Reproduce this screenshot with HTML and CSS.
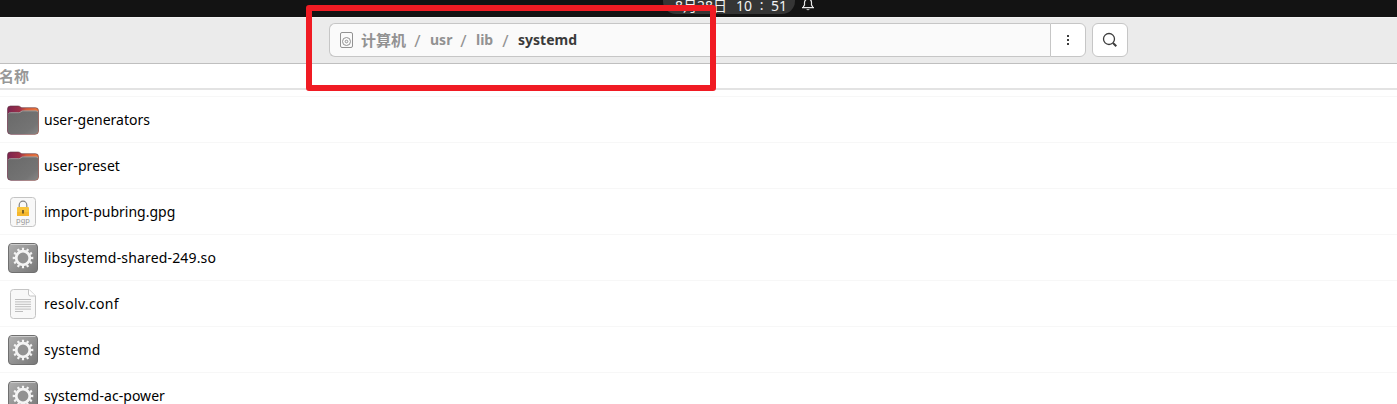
FILE: index.html
```html
<!DOCTYPE html>
<html lang="zh-CN">
<head>
<meta charset="utf-8">
<title>systemd</title>
<link rel="stylesheet" href="styles.css">
</head>
<body>
<svg width="0" height="0" class="defs">
  <defs>
    <linearGradient id="back" x1="0" x2="1" y1="0" y2="0"><stop offset="0" stop-color="#7c2450"/><stop offset=".4" stop-color="#9c3048"/><stop offset=".6" stop-color="#d85c3c"/><stop offset="1" stop-color="#ee7a3c"/></linearGradient>
    <linearGradient id="front" x1="0" x2="1" y1="0" y2="1"><stop offset="0" stop-color="#696969"/><stop offset=".75" stop-color="#747474"/><stop offset="1" stop-color="#858585"/></linearGradient>
    <linearGradient id="metal" x1="0" x2="1" y1="0" y2="1"><stop offset="0" stop-color="#b0b0b0"/><stop offset="1" stop-color="#777"/></linearGradient>
    <symbol id="folder" viewBox="0 0 34 32">
      <path d="M1.500 5Q1.500 2 4.500 2H12Q13.500 2 14.500 3T17 3.700H29.500Q32.500 3.700 32.500 6.700V27Q32.500 30.300 29 30.300H5Q1.500 30.300 1.500 27Z" fill="url(#back)" stroke="#5a3440" stroke-opacity=".6"/>
      <path d="M2 10.500Q2 8.500 4 8.500H12.500Q14 8.500 15 7.500T17.500 6.700H30Q32 6.700 32 8.700V27Q32 30 29 30H5Q2 30 2 27Z" fill="url(#front)"/>
      <path d="M2.500 9.500Q3 8.700 4.500 8.700H12.500Q14 8.700 15 7.700T17.500 6.900H30Q31.500 6.900 31.800 8" fill="none" stroke="#aaa" stroke-width=".8"/>
    </symbol>
    <symbol id="gear" viewBox="0 0 34 32">
      <rect x="2.500" y="1.500" width="29" height="29" rx="3.500" fill="url(#metal)" stroke="#707070"/>
      <path d="M4.500 2.500H29.500" stroke="#ccc" stroke-width="1"/>
      <circle cx="17" cy="16" r="6.800" fill="#929292" stroke="#f4f4f4" stroke-width="2.800"/>
      <circle cx="17" cy="16" r="9.100" fill="none" stroke="#f4f4f4" stroke-width="2.400" pathLength="120" stroke-dasharray="4.600 5.400" stroke-dashoffset="2.300"/>
    </symbol>
    <symbol id="pgp" viewBox="0 0 34 32">
      <rect x="4.500" y="1.500" width="25" height="29" rx="3" fill="#f8f8f8" stroke="#c4c4c4"/>
      <path d="M13.200 12V9a3.800 3.800 0 0 1 7.600 0v3" fill="none" stroke="#858585" stroke-width="1.200"/>
      <rect x="11" y="11" width="12" height="9" rx="1" fill="#f8c43c"/>
      <path d="M11 16H23V19.500Q23 20 22.500 20H11.500Q11 20 11 19.500Z" fill="#f5b72c"/>
      <path d="M16.200 14h1.600v3.500h-1.600z" fill="#5a4a22"/>
      <text x="17" y="27.200" text-anchor="middle" class="pgp-label">pgp</text>
    </symbol>
    <symbol id="doc" viewBox="0 0 34 32">
      <path d="M7.500 1.500H23L29.500 8V27.500Q29.500 30.500 26.500 30.500H7.500Q4.500 30.500 4.500 27.500V4.500Q4.500 1.500 7.500 1.500Z" fill="#f8f8f8" stroke="#c4c4c4"/>
      <path d="M22.500 1.500V6Q22.500 8 24.500 8H29.500" fill="#fff" stroke="#c4c4c4"/>
      <path d="M9 11.500H25M9 13.900H25M9 16.300H25M9 18.700H25M9 21.100H25M9 23.500H17" stroke="#bdbdbd" stroke-width="1"/>
    </symbol>
  </defs>
</svg>

<div class="topbar">
  <div class="clock"><span class="date">8月28日</span><span>10</span><span class="colon">:</span><span>51</span></div>
  <svg class="bell" width="14" height="16" viewBox="0 0 14 16" fill="none" stroke="#e8e8e8" stroke-width="1.200"><path d="M2.500 11.500V10.500L3.500 9V6.500a3.500 3.500 0 0 1 7 0V9L11.500 10.500V11.500M1 11.600H13"/><path d="M5.200 13.200Q7 15.200 8.800 13.200Z" fill="#e8e8e8" stroke="none"/></svg>
</div>

<header class="header">
  <div class="pathgroup">
    <div class="pathbar">
      <svg width="13" height="16" viewBox="0 0 13 16" fill="none" stroke="#929292"><rect x=".5" y=".5" width="12" height="15" rx="1.500"/><circle cx="6.500" cy="9.500" r="4"/><circle cx="6.500" cy="9.500" r="1.300"/></svg>
      <span class="crumb root">计算机</span>
      <span class="slash">/</span><span class="crumb usr">usr</span>
      <span class="slash">/</span><span class="crumb lib">lib</span>
      <span class="slash">/</span><span class="crumb current">systemd</span>
    </div>
    <div class="button menu"><i></i><i></i><i></i></div>
  </div>
  <div class="button search"><svg width="16" height="16" viewBox="0 0 16 16" fill="none" stroke="#3d3d3d"><circle cx="7" cy="7" r="5.500" stroke-width="1.300"/><path d="M11 11L14.300 14.300" stroke-width="2"/></svg></div>
</header>

<div class="columns">名称</div>
<main class="list">
  <div class="row"><svg><use href="#folder"/></svg><span>user-generators</span></div>
  <div class="row"><svg><use href="#folder"/></svg><span class="preset">user-preset</span></div>
  <div class="row"><svg><use href="#pgp"/></svg><span>import-pubring.gpg</span></div>
  <div class="row"><svg><use href="#gear"/></svg><span class="shared">libsystemd-shared-249.so</span></div>
  <div class="row"><svg><use href="#doc"/></svg><span class="resolv">resolv.conf</span></div>
  <div class="row"><svg><use href="#gear"/></svg><span class="daemon">systemd</span></div>
  <div class="row"><svg><use href="#gear"/></svg><span class="power">systemd-ac-power</span></div>
</main>
<div class="highlight"></div>
</body>
</html>
```
FILE: styles.css
```css
* { box-sizing: border-box; }
body {
  margin: 0;
  height: 404px;
  overflow: hidden;
  position: relative;
  background: #fff;
  font-family: "Noto Sans", "Noto Sans CJK SC", sans-serif;
  font-size: 14px;
  color: #000;
}
svg { display: block; flex: none; }
.defs { position: absolute; }
.topbar {
  height: 17px;
  background: #131313;
  display: flex;
  align-items: flex-start;
  padding-left: 663px;
  overflow: hidden;
}
.clock {
  width: 132px;
  height: 26px;
  margin-top: -12px;
  padding: 8px 0 0 12px;
  border-radius: 13px;
  background: #353535;
  color: #f2f2f2;
  display: flex;
  line-height: 20px;
  white-space: nowrap;
}
.date { width: 61px; }
.colon { width: 19px; text-align: center; margin-top: -1px; }
.bell { margin: -4px 0 0 6px; }
.header {
  height: 47px;
  padding: 5px 0 0 329px;
  background: #ebebeb;
  border-top: 1px solid #f3f3f3;
  border-bottom: 1px solid #bfbfbf;
  display: flex;
  gap: 6px;
}
.pathgroup { display: flex; width: 757px; height: 34px; }
.pathbar {
  width: 721px;
  height: 34px;
  border: 1px solid #c6c6c6;
  border-right: 0;
  border-radius: 6px 0 0 6px;
  background: #fafafa;
  display: flex;
  align-items: center;
  padding-left: 10px;
  font-weight: 700;
  color: #929292;
  white-space: nowrap;
}
.crumb { line-height: 20px; }
.root { width: 44px; margin-left: 8px; font-size: 15px; }
.slash { width: 25px; text-align: center; font-size: 17px; font-weight: 400; }
.usr { width: 21px; }
.lib { width: 17px; }
.current { color: #3a3a3a; }
.button {
  width: 36px;
  height: 34px;
  border: 1px solid #c6c6c6;
  border-radius: 6px;
  background: #fff;
  display: flex;
  align-items: center;
  justify-content: center;
}
.menu { border-radius: 0 6px 6px 0; flex-direction: column; gap: 2px; }
.menu i { width: 2px; height: 2px; background: #3d3d3d; }
.columns {
  height: 26px;
  border-bottom: 2px solid #e3e3e3;
  font: 700 15px/24px "Noto Sans CJK SC", sans-serif;
  color: #989898;
  text-indent: -1px;
}
.list { padding-top: 6px; }
.row {
  height: 46px;
  border-top: 1px solid #f7f7f7;
  display: flex;
  align-items: center;
  padding-left: 6px;
  gap: 4px;
}
.row svg { width: 34px; height: 32px; }
.row span { line-height: 20px; white-space: nowrap; }
.preset { letter-spacing: .07px; }
.shared { letter-spacing: .16px; }
.resolv { letter-spacing: .35px; }
.daemon { letter-spacing: .2px; }
.power { letter-spacing: .04px; }
.pgp-label { font: 7.5px "Noto Sans", sans-serif; fill: #999; }
.highlight {
  position: absolute;
  left: 306px;
  top: 5px;
  width: 410px;
  height: 86px;
  border: 6px solid #f01b23;
  border-radius: 3px;
}
```
